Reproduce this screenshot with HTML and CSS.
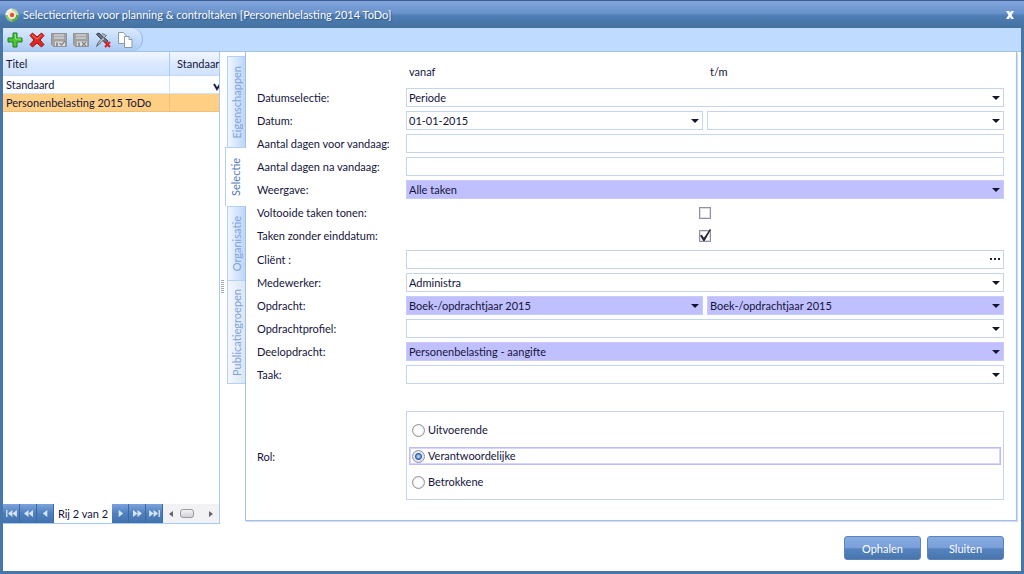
FILE: index.html
```html
<!DOCTYPE html>
<html lang="nl">
<head>
<meta charset="utf-8">
<title>Selectiecriteria voor planning &amp; controltaken</title>
<link rel="stylesheet" href="styles.css">
</head>
<body>
<div class="window">
  <header class="titlebar">
    <svg class="app-icon" viewBox="0 0 14 14" aria-hidden="true">
      <circle cx="7" cy="7" r="6.500" fill="#b9dca4"/>
      <path d="M7 .5A6.500 6.500 0 0 0 .5 7h3A3.500 3.500 0 0 1 7 3.500z" fill="#f1f5ea"/>
      <path d="M7 13.500A6.500 6.500 0 0 0 13.500 7h-3A3.500 3.500 0 0 1 7 10.500z" fill="#4faa33"/>
      <path d="M.5 7A6.500 6.500 0 0 0 7 13.500v-3A3.500 3.500 0 0 1 3.500 7z" fill="#86c66c"/>
      <circle cx="7" cy="7" r="4.200" fill="#f4ead0"/>
      <circle cx="7" cy="7" r="2.200" fill="#e0533a"/>
    </svg>
    <h1 class="title">Selectiecriteria voor planning &amp; controltaken [Personenbelasting 2014 ToDo]</h1>
    <button class="close" aria-label="Sluiten">
      <svg viewBox="0 0 10 10"><path d="M1 1h3l1 2 1-2h3L6.500 5 9 9H6L5 7 4 9H1l2.500-4z" fill="#fff"/></svg>
    </button>
  </header>

  <div class="toolbar">
    <div class="tools">
      <button class="tool" aria-label="Toevoegen"><svg viewBox="0 0 16 16"><path d="M6 1h4v5h5v4h-5v5H6v-5H1V6h5z" fill="#4cc437" stroke="#1d8217"/><path d="M7 2.500h1.500V7H14" fill="none" stroke="#93e67c"/></svg></button>
      <button class="tool" aria-label="Verwijderen"><svg viewBox="0 0 16 16"><path d="M1 3.500 3.500 1 8 5l4.500-4L15 3.500 11 8l4 4.500-2.500 2.500L8 11l-4.500 4L1 12.500 5 8z" fill="#dd2a22" stroke="#9c1410"/><path d="M3 3l5 4 4.500-4" fill="none" stroke="#f37b6d"/></svg></button>
      <button class="tool" aria-label="Opslaan"><svg viewBox="0 0 16 16"><path d="M.5 1.500h15v13h-13l-2-2z" fill="#a2a2a2" stroke="#929292"/><path d="M3 2h10v5H3z" fill="#c4c4c4"/><path d="M3 4.500h10" stroke="#adadad"/><path d="M4 9.500h10V14H4z" fill="#dedede"/><path d="M5 10.500h2V14H5z" fill="#909090"/><path d="m8.500 11 2 2L14 9" fill="none" stroke="#858585" stroke-width="1.300"/></svg></button>
      <button class="tool" aria-label="Opslaan en sluiten"><svg viewBox="0 0 16 16"><path d="M.5 1.500h15v13h-13l-2-2z" fill="#a2a2a2" stroke="#929292"/><path d="M3 2h10v5H3z" fill="#c4c4c4"/><path d="M3 4.500h10" stroke="#adadad"/><path d="M4 9.500h10V14H4z" fill="#dedede"/><path d="M5 10.500h2V14H5z" fill="#909090"/><path d="m9 10 4 4m0-4-4 4" fill="none" stroke="#858585" stroke-width="1.300"/></svg></button>
      <button class="tool" aria-label="Wissen"><svg viewBox="0 0 16 16"><path d="M1.500 2 4 1l9 8-2 2.500L3 4z" fill="#69727e" stroke="#3c434c"/><path d="M8 5.500 3.500 10l-2 4.500L6 10.500l3-3" fill="#c8d2de" stroke="#59616c"/><path d="M7 1.500 11.500 3.500 9 6" fill="#b5c0cd" stroke="#6b7480"/><path d="m10 10 5 5m0-5-5 5" stroke="#d9202a" stroke-width="2.200"/></svg></button>
      <button class="tool" aria-label="Kopiëren"><svg viewBox="0 0 16 16"><path d="M1.500.5h5l2.500 3v8H1.500z" fill="#fff" stroke="#8998ad"/><path d="M7.500 4.500H12l3 3v8H7.500z" fill="#fff" stroke="#8998ad"/><path d="M12 4.500v3h3" fill="#dfe8f4" stroke="#8998ad"/></svg></button>
    </div>
  </div>

  <main class="body">
    <section class="list">
      <div class="list-scroll">
        <table class="table">
          <thead><tr><th>Titel</th><th class="col-std">Standaar</th></tr></thead>
          <tbody>
            <tr><td>Standaard</td><td class="mark"><svg viewBox="0 0 6 10" role="img" aria-label="Ja"><path d="m1 3 3 5 5-8" fill="none" stroke="#224" stroke-width="2"/></svg></td></tr>
            <tr class="selected"><td>Personenbelasting 2015 ToDo</td><td></td></tr>
          </tbody>
        </table>
      </div>
      <nav class="pager" aria-label="Rijen">
        <button class="page" aria-label="Eerste"><svg viewBox="0 0 14 10"><path d="M1 1h1.500v8H1zM8 1v8L3 5zM13 1v8L8 5z"/></svg></button>
        <button class="page" aria-label="Vorige pagina"><svg viewBox="0 0 14 10"><path d="M7 1v8L2 5zM12 1v8L7 5z"/></svg></button>
        <button class="page" aria-label="Vorige"><svg viewBox="0 0 14 10"><path d="M9 1v8L4 5z"/></svg></button>
        <span class="rows">Rij 2 van 2</span>
        <button class="page" aria-label="Volgende"><svg viewBox="0 0 14 10"><path d="M5 1v8l5-4z"/></svg></button>
        <button class="page" aria-label="Volgende pagina"><svg viewBox="0 0 14 10"><path d="M2 1v8l5-4zM7 1v8l5-4z"/></svg></button>
        <button class="page" aria-label="Laatste"><svg viewBox="0 0 14 10"><path d="M1 1v8l5-4zM6 1v8l5-4zM11.500 1H13v8h-1.500z"/></svg></button>
        <div class="scrollbar">
          <svg viewBox="0 0 4 6"><path d="M4 0v6L0 3z"/></svg>
          <span class="thumb"></span>
          <svg class="right" viewBox="0 0 4 6"><path d="M0 0v6l4-3z"/></svg>
        </div>
      </nav>
    </section>

    <div class="splitter"><span class="grip"></span></div>

    <div class="tabs" role="tablist">
      <button class="tab tab-1" role="tab"><span>Eigenschappen</span></button>
      <button class="tab tab-2 active" role="tab" aria-selected="true"><span>Selectie</span></button>
      <button class="tab tab-3" role="tab"><span>Organisatie</span></button>
      <button class="tab tab-4" role="tab"><span>Publicatiegroepen</span></button>
    </div>

    <form class="panel">
      <span></span><span class="head">vanaf</span><span class="head">t/m</span>

      <label for="f1">Datumselectie:</label>
      <div class="field wide drop"><select id="f1"><option>Periode</option></select></div>

      <label for="f2">Datum:</label>
      <div class="field drop"><input id="f2" type="text" value="01-01-2015"></div>
      <div class="field drop"><input type="text" aria-label="Datum t/m"></div>

      <label for="f3">Aantal dagen voor vandaag:</label>
      <div class="field wide"><input id="f3" type="text"></div>

      <label for="f4">Aantal dagen na vandaag:</label>
      <div class="field wide"><input id="f4" type="text"></div>

      <label for="f5">Weergave:</label>
      <div class="field wide drop filled"><select id="f5"><option>Alle taken</option></select></div>

      <label for="f6">Voltooide taken tonen:</label>
      <div class="wide center"><input class="check" id="f6" type="checkbox"></div>

      <label for="f7">Taken zonder einddatum:</label>
      <div class="wide center"><input class="check" id="f7" type="checkbox" checked></div>

      <label for="f8">Cliënt :</label>
      <div class="field wide"><input id="f8" type="text"><button type="button" class="more" aria-label="Zoeken"><svg viewBox="0 0 10 2"><path d="M0 0h2v2H0zM4 0h2v2H4zM8 0h2v2H8z" fill="#223"/></svg></button></div>

      <label for="f9">Medewerker:</label>
      <div class="field wide drop"><select id="f9"><option>Administra</option></select></div>

      <label for="f10">Opdracht:</label>
      <div class="field drop filled"><select id="f10"><option>Boek-/opdrachtjaar 2015</option></select></div>
      <div class="field drop filled"><select aria-label="Opdracht t/m"><option>Boek-/opdrachtjaar 2015</option></select></div>

      <label for="f11">Opdrachtprofiel:</label>
      <div class="field wide drop"><select id="f11"><option></option></select></div>

      <label for="f12">Deelopdracht:</label>
      <div class="field wide drop filled"><select id="f12"><option>Personenbelasting - aangifte</option></select></div>

      <label for="f13">Taak:</label>
      <div class="field wide drop"><select id="f13"><option></option></select></div>

      <span class="role-label" id="rol">Rol:</span>
      <div class="roles wide" role="radiogroup" aria-labelledby="rol">
        <label class="role"><input type="radio" name="rol">Uitvoerende</label>
        <label class="role focus"><input type="radio" name="rol" checked>Verantwoordelijke</label>
        <label class="role"><input type="radio" name="rol">Betrokkene</label>
      </div>
    </form>
  </main>

  <footer class="actions">
    <button class="action">Ophalen</button>
    <button class="action">Sluiten</button>
  </footer>
</div>
</body>
</html>
```
FILE: styles.css
```css
* { box-sizing: border-box; }

body {
  margin: 0;
  font: 11px/14px Lato, "Liberation Sans", sans-serif;
  color: #14143a;
}

button, input, select {
  font: inherit;
  color: inherit;
  margin: 0;
  padding: 0;
  border: 0;
  background: none;
}

svg { display: block; }

.window {
  display: flex;
  flex-direction: column;
  min-height: 100vh;
  border: 3px solid #4876a9;
  border-top: 0;
  background: #fff;
}

.titlebar {
  display: flex;
  align-items: center;
  gap: 4px;
  height: 28px;
  margin: 0 -3px;
  padding: 0 9px 0 5px;
  border-top: 1px solid #3c5c94;
  background: linear-gradient(#82a4dc, #6a92cc 45%, #4d7db4 55%, #44719f);
}
.app-icon { width: 14px; height: 14px; }
.title {
  flex: 1;
  margin: 0;
  font-size: 11px;
  font-weight: normal;
  color: #fff;
  text-shadow: 1px 1px 1px #35598c;
}
.close svg { width: 10px; height: 10px; }

.toolbar {
  height: 24px;
  border-bottom: 1px solid #a3c2ea;
  background: #bfdbff;
}
.tools {
  display: flex;
  align-items: center;
  gap: 5px;
  width: 140px;
  height: 23px;
  padding-left: 4px;
  border-radius: 0 12px 12px 0;
  border-right: 1px solid #94b5e0;
  background: linear-gradient(#d9e9ff, #c3dbfa 50%, #a9c9f2);
}
.tool svg { width: 16px; height: 16px; }
.tool { padding-right: 1px; }

.body { flex: 1; display: flex; }

.list {
  display: flex;
  flex-direction: column;
  width: 217px;
  margin-bottom: -3px;
  border-right: 1px solid #a9caf3;
  border-bottom: 1px solid #a9caf3;
}
.list-scroll { flex: 1; }
.table {
  width: 100%;
  table-layout: fixed;
  border-collapse: separate;
  border-spacing: 0;
}
th {
  height: 24px;
  padding: 1px 3px 0;
  text-align: left;
  font-weight: normal;
  border-right: 1px solid #a9caf3;
  border-bottom: 1px solid #c4d9f6;
  background: linear-gradient(#f2f7ff, #dbe9ff 50%, #d0e2fd);
}
th.col-std { width: 49px; padding: 1px 0 0 7px; border-right: 0; white-space: nowrap; }
td {
  height: 18px;
  padding: 1px 3px 0;
  border-right: 1px solid #d3e2f7;
  border-bottom: 1px solid #d3e2f7;
}
td:last-child { padding: 0; border-right: 0; }
.mark svg { width: 6px; height: 10px; margin: 3px 0 0 auto; }
.selected td { background: #ffcf84; border-color: #f0c078; }

.pager {
  display: flex;
  align-items: center;
  height: 19px;
  background: #fff;
}
.page {
  display: flex;
  align-items: center;
  justify-content: center;
  width: 17px;
  height: 19px;
  border-right: 1px solid #3c68a3;
  background: linear-gradient(#7ba2dc, #4f80bd 50%, #4373ae);
}
.page svg { width: 13px; height: 9px; fill: #d6e5fb; }
.rows { flex: 1; padding-top: 1px; text-align: center; white-space: nowrap; }
.scrollbar {
  display: flex;
  align-items: center;
  gap: 7px;
  width: 56px;
  height: 19px;
  padding: 0 6px 0 6px;
  background: #f2f2f4;
}
.scrollbar svg { width: 4px; height: 6px; fill: #666; }
.scrollbar .right { margin-left: auto; }
.thumb {
  width: 14px;
  height: 9px;
  border: 1px solid #9a9aa0;
  border-radius: 3px;
  background: linear-gradient(#f4f4f6, #d0d0d6);
}

.splitter { display: flex; align-items: center; width: 5px; }
.grip {
  width: 3px;
  height: 14px;
  margin-left: 1px;
  background: repeating-linear-gradient(#a8a8b4 0 1px, #fff 1px 2px);
}

.tabs {
  display: flex;
  flex-direction: column;
  align-items: flex-end;
  width: 20px;
  padding-top: 4px;
}
.tab {
  display: flex;
  align-items: center;
  justify-content: center;
  width: 18px;
  border: 1px solid #b4d0f4;
  border-bottom-width: 0;
  border-right: 0;
  background: linear-gradient(90deg, #f0f6ff, #bcd6fb);
  color: #7da4da;
}
.tab span { writing-mode: vertical-rl; transform: rotate(180deg); white-space: nowrap; }
.tab-1 { height: 91px; }
.tab-2 { height: 59px; }
.tab-3 { height: 74px; }
.tab-4 { height: 104px; border-bottom-width: 1px; background: linear-gradient(90deg, #f4f7fc, #dbe6f5); }
.tab.active { width: 21px; margin-right: -1px; background: #fff; color: #4e7ab8; z-index: 1; }

.panel {
  flex: 1;
  display: grid;
  grid-template-columns: 145px 1fr 1fr;
  grid-template-rows: 34px repeat(13, minmax(23px, 1fr)) 114px;
  column-gap: 4px;
  align-items: center;
  margin-right: 4px;
  padding: 0 12px 20px 11px;
  border: 1px solid #a3bfe4;
  border-top: 0;
  box-shadow: 1px 1px 1px #d5def0;
}
.panel > label { padding-top: 1px; white-space: nowrap; }
.head { padding: 5px 0 0 3px; }
.wide { grid-column: 2 / 4; }
.field {
  position: relative;
  display: flex;
  height: 19px;
  border: 1px solid #c6d6ea;
}
.field input, .field select {
  appearance: none;
  flex: 1;
  min-width: 0;
  padding: 1px 16px 0 2px;
  outline: 0;
}
.filled { background: #c0c0ff; border-color: #c6ccfa; }
.drop::after {
  content: "";
  position: absolute;
  right: 3px;
  top: 7px;
  border: 4px solid transparent;
  border-top-color: #15152e;
  border-bottom: 0;
  pointer-events: none;
}
.more { width: 13px; }
.more svg { width: 10px; height: 2px; }

.center { display: flex; justify-content: center; }
.check {
  appearance: none;
  position: relative;
  width: 12px;
  height: 12px;
  border: 1px solid #9292a2;
  background: #fff;
  box-shadow: inset 0 0 0 1px #dcdce4;
}
.check:checked::after {
  content: "";
  position: absolute;
  inset: -2px -1px 0 0;
  background: #24243a;
  clip-path: polygon(0 55%, 16% 48%, 36% 74%, 90% 0, 100% 4%, 42% 100%, 30% 100%);
}

.role-label { align-self: end; padding-bottom: 36px; }
.roles {
  align-self: end;
  display: flex;
  flex-direction: column;
  gap: 10px;
  padding: 10px 3px 9px;
  border: 1px solid #c6d6ea;
}
.role {
  display: flex;
  align-items: center;
  gap: 3px;
  height: 16px;
  padding-left: 2px;
}
.focus { outline: 1px solid #bcbcfa; box-shadow: inset 0 0 0 1px #d6d6fb; }
.role input {
  appearance: none;
  width: 13px;
  height: 13px;
  border: 1px solid #92929c;
  border-radius: 50%;
  background: radial-gradient(#fff 45%, #d2d2d8);
}
.role input:checked {
  background: radial-gradient(circle, #a6c8f4 0 1px, #2f5c9c 3px, #e8eef8 4px, #ccd3e0);
}

.actions {
  display: flex;
  justify-content: flex-end;
  gap: 6px;
  padding: 15px 17px 11px;
}
.action {
  width: 77px;
  height: 24px;
  padding-top: 1px;
  border: 1px solid #5b83bc;
  border-radius: 3px;
  background: linear-gradient(#88abe2, #7b9fda 48%, #5583bf 54%, #4875ab);
  color: #fff;
}
```
